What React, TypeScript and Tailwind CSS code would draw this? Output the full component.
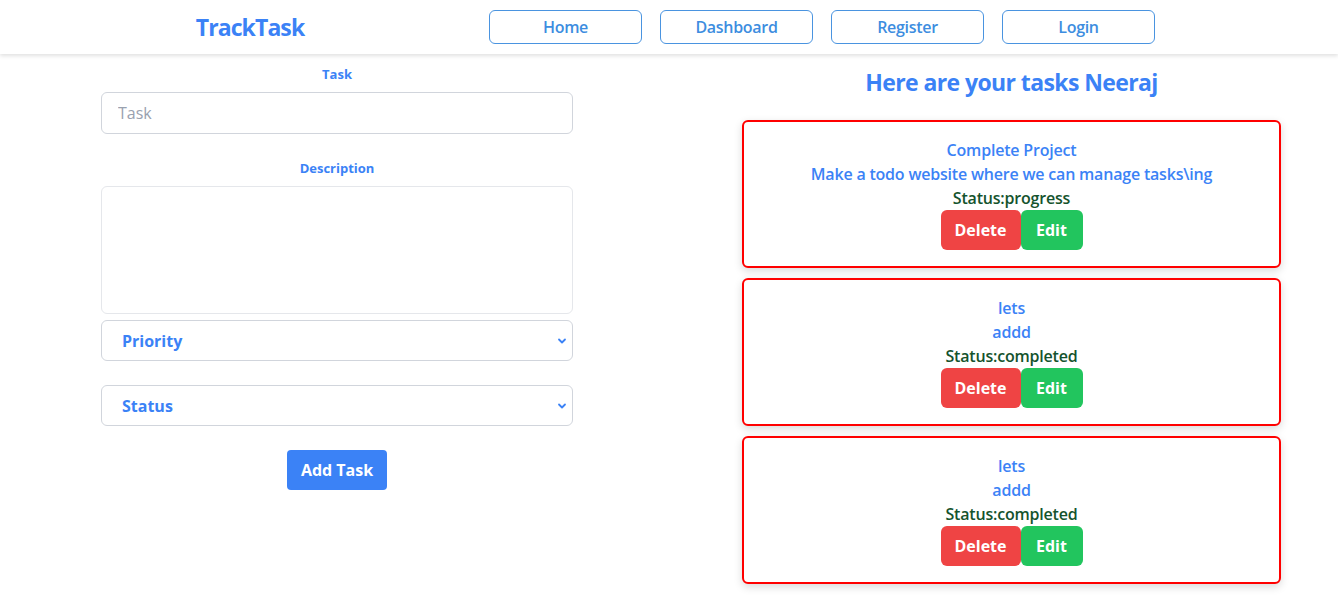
import React from "react";

type Task = { title: string; description: string; status: string };

const tasks: Task[] = [
  { title: "Complete Project", description: "Make a todo website where we can manage tasks\\ing", status: "progress" },
  { title: "lets", description: "addd", status: "completed" },
  { title: "lets", description: "addd", status: "completed" },
];

function Chevron() {
  return (
    <svg width="10" height="10" viewBox="0 0 10 10" className="pointer-events-none absolute right-[6px] top-1/2 -translate-y-1/2 text-[#3b82f6]">
      <path d="M2 3.5 L5 6.5 L8 3.5" fill="none" stroke="currentColor" strokeWidth="1.8" strokeLinecap="round" strokeLinejoin="round" />
    </svg>
  );
}

function Navbar() {
  const links = ["Home", "Dashboard", "Register", "Login"];
  return (
    <header className="h-[54px] bg-white shadow-[0_2px_4px_rgba(0,0,0,0.12)] flex items-center relative z-10">
      <div className="w-[500px] flex justify-center">
        <span className="text-[23px] font-bold tracking-[-0.9px] text-[#3b82f6] leading-8">TrackTask</span>
      </div>
      <nav className="flex items-center gap-[18px] ml-[-11px]">
        {links.map((l) => (
          <button
            key={l}
            className="w-[153px] h-[34px] rounded-md border border-[#4a94e0] text-[#3d8de0] text-[16px] font-semibold tracking-[-0.3px]"
          >
            {l}
          </button>
        ))}
      </nav>
    </header>
  );
}

function TaskForm() {
  return (
    <div className="w-[674px] pt-[10px]">
      <form className="w-[472px] mx-auto flex flex-col">
        <label className="text-center text-[13px] font-bold text-[#3b82f6] leading-5">Task</label>
        <input
          placeholder="Task"
          className="mt-2 h-[42px] rounded-md border border-gray-300 px-4 text-[16px] placeholder:text-gray-400 outline-none"
        />
        <label className="mt-6 text-center text-[13px] font-bold text-[#3b82f6] leading-5">Description</label>
        <textarea className="mt-2 h-[128px] rounded-md border border-gray-200 resize-none outline-none" />
        <div className="relative mt-[6px]">
          <select className="w-full h-[41px] appearance-none rounded-md border border-gray-300 px-5 text-[16px] font-bold text-[#3b82f6] bg-white outline-none">
            <option>Priority</option>
          </select>
          <Chevron />
        </div>
        <div className="relative mt-6">
          <select className="w-full h-[41px] appearance-none rounded-md border border-gray-300 px-5 text-[16px] font-bold text-[#3b82f6] bg-white outline-none">
            <option>Status</option>
          </select>
          <Chevron />
        </div>
        <button type="button" className="mt-6 self-center w-[100px] h-[40px] rounded bg-[#3b82f6] text-white text-[16px] font-bold">
          Add Task
        </button>
      </form>
    </div>
  );
}

function TaskCard({ task }: { task: Task }) {
  return (
    <div className="h-[148px] rounded-md border-2 border-[#ff0000] bg-white shadow-[0_3px_8px_rgba(0,0,0,0.15)] flex flex-col items-center pt-[16px]">
      <p className="text-[16px] font-semibold tracking-[-0.2px] text-[#3b82f6] leading-6">{task.title}</p>
      <p className="text-[16px] font-semibold tracking-[-0.2px] text-[#3b82f6] leading-6">{task.description}</p>
      <p className="text-[16px] font-semibold tracking-[-0.2px] text-[#14532d] leading-6">Status:{task.status}</p>
      <div className="flex">
        <button className="w-[80px] h-[40px] rounded-md bg-[#ef4444] text-white text-[16px] font-bold">Delete</button>
        <button className="w-[62px] h-[40px] rounded-md bg-[#22c55e] text-white text-[16px] font-bold">Edit</button>
      </div>
    </div>
  );
}

export default function App() {
  return (
    <div className="min-h-screen bg-white font-['Open_Sans',sans-serif]">
      <Navbar />
      <main className="flex">
        <TaskForm />
        <section className="ml-[68px] w-[539px] flex flex-col">
          <h1 className="mt-3 text-center text-[23px] font-bold tracking-[-0.6px] text-[#3b82f6] leading-8">Here are your tasks Neeraj</h1>
          <div className="mt-[22px] flex flex-col gap-[10px]">
            {tasks.map((t, i) => (
              <TaskCard key={i} task={t} />
            ))}
          </div>
        </section>
      </main>
    </div>
  );
}
